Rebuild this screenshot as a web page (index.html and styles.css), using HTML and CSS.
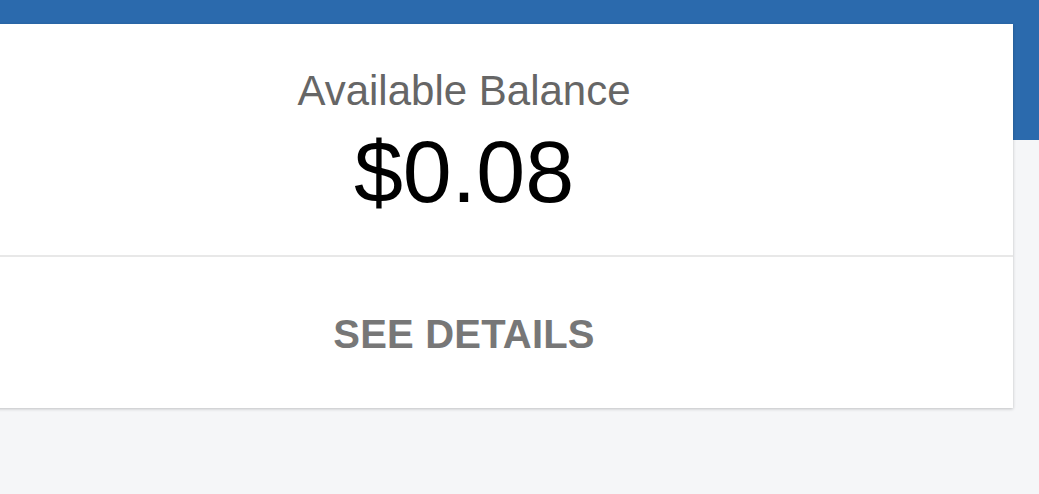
FILE: index.html
```html
<!DOCTYPE html>
<html lang="en">

<head>
  <meta charset="UTF-8">
  <meta name="viewport" content="width=device-width, initial-scale=1.0">
  <title>Balance</title>
  <link rel="stylesheet" href="styles.css">
</head>

<body>
  <header class="top-band"></header>

  <!-- Balance card -->
  <section class="balance-card">
    <div class="balance-info">
      <p class="balance-label">Available Balance</p>
      <p class="balance-amount">$0.08</p>
    </div>
    <a class="details-link" href="#">SEE DETAILS</a>
  </section>
</body>

</html>
```

FILE: styles.css
```css
html,
body {
  margin: 0;
  padding: 0;
}

body {
  font-family: "Liberation Sans", Arial, sans-serif;
  background-color: #f5f6f8;
  min-height: 494px;
  overflow: hidden;
}

.top-band {
  background-color: #2b6aad;
  height: 140px;
}

.balance-card {
  background-color: #ffffff;
  width: 1098px;
  margin-top: -116px;
  margin-left: -85px;
  box-shadow: 0 1px 3px rgba(0, 0, 0, 0.22);
  display: flex;
  flex-direction: column;
}

.balance-info {
  padding: 43px 0 35px;
  text-align: center;
  border-bottom: 2px solid #e8e8e8;
}

.balance-label {
  margin: 0 0 9px;
  font-size: 42px;
  line-height: 48px;
  color: #666666;
}

.balance-amount {
  margin: 0;
  font-size: 88px;
  line-height: 96px;
  color: #000000;
}

.details-link {
  display: block;
  padding: 53px 0 50px;
  text-align: center;
  font-size: 40px;
  line-height: 48px;
  font-weight: bold;
  letter-spacing: 0.2px;
  color: #777777;
  text-decoration: none;
}
```
